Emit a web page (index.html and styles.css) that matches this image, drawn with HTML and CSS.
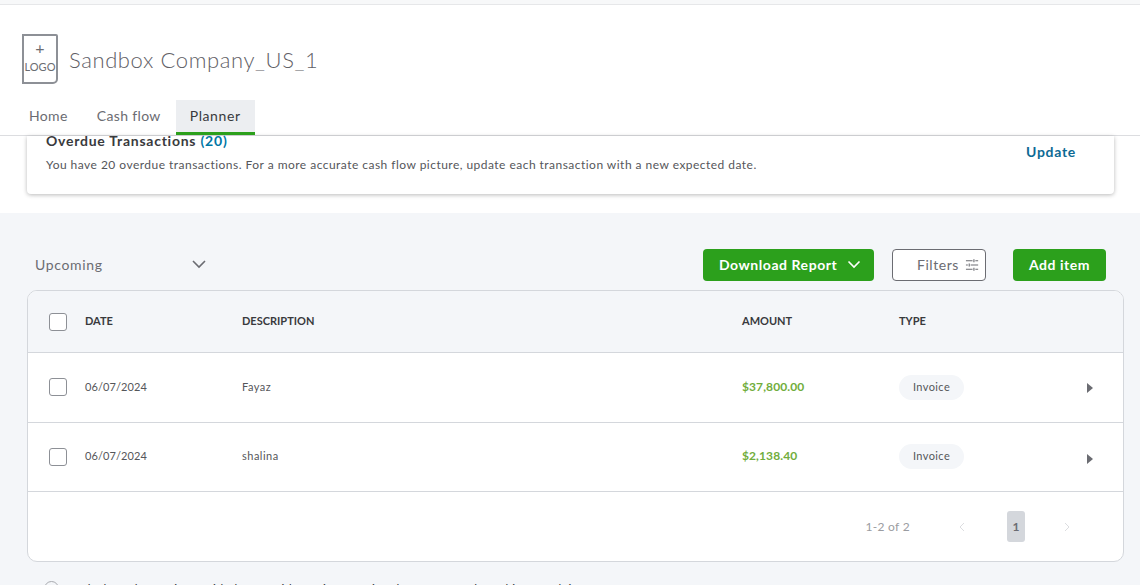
FILE: index.html
```html
<!DOCTYPE html>
<html>
<head>
  <title>Planner</title>
  <link rel="stylesheet" href="styles.css">
</head>
<body>
  <div class="top-strip"></div>
  <header class="header">
    <div class="company">
      <div class="logo-box">
        <span class="logo-plus">+</span>
        <span class="logo-text">LOGO</span>
      </div>
      <div class="company-name">Sandbox Company_US_1</div>
    </div>
    <nav class="tabs">
      <a class="tab">Home</a>
      <a class="tab">Cash flow</a>
      <a class="tab active">Planner</a>
    </nav>
  </header>

  <section class="notice-wrap">
    <div class="notice">
      <div class="notice-text">
        <div class="notice-title">Overdue Transactions <span class="count">(20)</span></div>
        <div class="notice-desc">You have 20 overdue transactions. For a more accurate cash flow picture, update each transaction with a new expected date.</div>
      </div>
      <a class="update">Update</a>
    </div>
  </section>

  <main class="main">
    <div class="toolbar">
      <div class="view-select">
        <span>Upcoming</span>
        <svg width="16" height="10" viewBox="0 0 16 10"><path d="M2 2l6 6 6-6" fill="none" stroke="#6b6c72" stroke-width="1.6"/></svg>
      </div>
      <div class="actions">
        <button class="btn btn-green btn-download">Download Report
          <svg width="14" height="9" viewBox="0 0 14 9"><path d="M1.500 1.500l5.500 5.500 5.500-5.500" fill="none" stroke="#fff" stroke-width="1.600"/></svg>
        </button>
        <button class="btn btn-filters">Filters
          <svg width="15" height="14" viewBox="0 0 15 14"><path d="M1 2.500h7M11 2.500h3M1 7h2M6 7h8M1 11.500h7M11 11.500h3M9.500 1v3M4.500 5.500v3M9.500 10v3" fill="none" stroke="#6b6c72" stroke-width="1.200"/></svg>
        </button>
        <button class="btn btn-green btn-add">Add item</button>
      </div>
    </div>

    <div class="table-card">
      <div class="row head">
        <div class="cell check"><span class="checkbox"></span></div>
        <div class="cell date">DATE</div>
        <div class="cell desc">DESCRIPTION</div>
        <div class="cell amount">AMOUNT</div>
        <div class="cell type">TYPE</div>
      </div>
      <div class="row item">
        <div class="cell check"><span class="checkbox"></span></div>
        <div class="cell date">06/07/2024</div>
        <div class="cell desc">Fayaz</div>
        <div class="cell amount">$37,800.00</div>
        <div class="cell type"><span class="pill">Invoice</span></div>
        <div class="cell arrow"></div>
      </div>
      <div class="row item">
        <div class="cell check"><span class="checkbox"></span></div>
        <div class="cell date">06/07/2024</div>
        <div class="cell desc">shalina</div>
        <div class="cell amount">$2,138.40</div>
        <div class="cell type"><span class="pill">Invoice</span></div>
        <div class="cell arrow arrow-low"></div>
      </div>
      <div class="pager">
        <span class="pager-count">1-2 of 2</span>
        <svg width="7" height="10" viewBox="0 0 7 10"><path d="M6 1L2 5l4 4" fill="none" stroke="#dcdde0" stroke-width="1"/></svg>
        <span class="page-num">1</span>
        <svg width="7" height="10" viewBox="0 0 7 10"><path d="M1 1l4 4-4 4" fill="none" stroke="#dcdde0" stroke-width="1"/></svg>
      </div>
    </div>

    <div class="footnote">
      <span class="info-dot"></span>
      <span>Cash flow planner is provided as a guide for informational purposes only and is not advice.</span>
    </div>
  </main>
</body>
</html>
```

FILE: styles.css
```css
html, body {
  margin: 0;
  padding: 0;
  height: 585px;
  overflow: hidden;
}
body {
  font-family: "Lato", "Open Sans", sans-serif;
  background-color: #fff;
  color: #393a3d;
}
.top-strip {
  height: 4px;
  background-color: #f7f8f9;
  border-bottom: 1px solid #e6e7e9;
}
.header {
  height: 130px;
  border-bottom: 1px solid #dcdde0;
  display: flex;
  flex-direction: column;
  padding-left: 22px;
}
.company {
  display: flex;
  align-items: center;
  gap: 11px;
  padding-top: 29px;
}
.logo-box {
  width: 32px;
  height: 46px;
  border: 2px solid #8d9096;
  border-radius: 0 2px 5px 0;
  display: flex;
  flex-direction: column;
  align-items: center;
  color: #6b6c72;
}
.logo-plus {
  font-size: 16px;
  line-height: 16px;
  margin-top: 4px;
}
.logo-text {
  font-size: 11px;
  line-height: 14px;
  margin-top: 4px;
}
.company-name {
  font-size: 22px;
  font-weight: 300;
  letter-spacing: 0.6px;
  color: #5f6066;
}
.tabs {
  display: flex;
  gap: 1px;
  margin-top: 16px;
  margin-left: -7px;
}
.tab {
  font-size: 14px;
  line-height: 32px;
  height: 32px;
  padding: 0 14px;
  color: #6b6c72;
  letter-spacing: 0.35px;
}
.tab.active {
  background-color: #eceef1;
  color: #393a3d;
  border-bottom: 3px solid #2ca01c;
  letter-spacing: 0.6px;
}
.notice-wrap {
  height: 77px;
  padding: 0 26px 0 27px;
}
.notice {
  height: 58px;
  background-color: #fff;
  border-radius: 0 0 4px 4px;
  box-shadow: 0 1px 4px rgba(0, 0, 0, 0.28);
  display: flex;
  justify-content: space-between;
  padding-left: 19px;
  padding-right: 38px;
}
.notice-title {
  font-size: 14px;
  font-weight: 700;
  line-height: 18px;
  margin-top: -4px;
  letter-spacing: 0.75px;
}
.count {
  color: #0077a5;
  letter-spacing: 0.8px;
}
.notice-desc {
  font-size: 12px;
  line-height: 16px;
  margin-top: 7px;
  color: #55565a;
  letter-spacing: 0.47px;
}
.update {
  font-size: 14px;
  font-weight: 700;
  color: #0d6a94;
  margin-top: 7px;
  letter-spacing: 0.7px;
}
.main {
  background-color: #f4f6f9;
  box-sizing: border-box;
  height: 372px;
  overflow: hidden;
  padding: 36px 16px 0 27px;
}
.toolbar {
  height: 32px;
  display: flex;
  justify-content: space-between;
  align-items: center;
  padding-right: 18px;
}
.view-select {
  width: 172px;
  padding-left: 8px;
  padding-bottom: 2px;
  display: flex;
  justify-content: space-between;
  align-items: center;
  font-size: 14px;
  color: #6b6c72;
  letter-spacing: 0.65px;
}
.actions {
  display: flex;
  gap: 18px;
}
.btn {
  height: 32px;
  border-radius: 4px;
  font-family: inherit;
  font-size: 14px;
  font-weight: 700;
  border: none;
  padding-bottom: 2px;
  display: flex;
  align-items: center;
  justify-content: center;
  letter-spacing: 0.55px;
}
.btn-green {
  background-color: #2ca01c;
  color: #fff;
}
.btn-download {
  width: 171px;
  gap: 10px;
  justify-content: flex-start;
  padding-left: 16px;
}
.btn-filters {
  width: 94px;
  background-color: #fff;
  border: 1px solid #6b6c72;
  color: #6b6c72;
  font-weight: 400;
  gap: 6px;
  padding-left: 24px;
  margin-right: 9px;
}
.btn-add {
  width: 93px;
}
.table-card {
  margin-top: 9px;
  height: 270px;
  border: 1px solid #d4d7dc;
  border-radius: 10px;
  overflow: hidden;
  background-color: #fff;
}
.row {
  display: flex;
  align-items: center;
  border-bottom: 1px solid #d4d7dc;
  padding-left: 21px;
}
.row.head {
  height: 61px;
  background-color: #f4f6f9;
  font-size: 11px;
  font-weight: 700;
}
.row.item {
  height: 68.500px;
  background-color: #fff;
  font-size: 11px;
  color: #55565a;
  letter-spacing: 0.1px;
}
.check {
  width: 36px;
  display: flex;
}
.checkbox {
  width: 16px;
  height: 16px;
  background-color: #fff;
  border: 1px solid #8d9096;
  border-radius: 3px;
}
.date, .desc, .amount, .type {
  padding-bottom: 2px;
}
.date {
  width: 157px;
  flex: none;
}
.desc {
  width: 500px;
  flex: none;
}
.row.item .desc {
  letter-spacing: 0.5px;
}
.amount {
  width: 157px;
  flex: none;
}
.row.item .amount {
  font-weight: 700;
  color: #71ad3c;
  font-size: 12px;
}
.type {
  flex: 1;
}
.row.item .type {
  padding-bottom: 0;
}
.pill {
  display: inline-block;
  width: 65px;
  height: 25px;
  line-height: 23px;
  text-align: center;
  background-color: #f4f6f9;
  border-radius: 13px;
  letter-spacing: 0.4px;
}
.arrow {
  width: 0;
  height: 0;
  border-left: 6px solid #6b6c72;
  border-top: 5px solid transparent;
  border-bottom: 5px solid transparent;
  margin-right: 30px;
  margin-top: 2px;
}
.arrow-low {
  margin-top: 4px;
}
.pager {
  height: 69px;
  display: flex;
  align-items: center;
  justify-content: flex-end;
  padding-right: 52px;
  font-size: 12px;
  color: #9a9ca1;
}
.pager-count {
  margin-right: 48px;
  letter-spacing: 0.3px;
}
.page-num {
  width: 18px;
  height: 31px;
  line-height: 31px;
  text-align: center;
  background-color: #d4d7dc;
  border-radius: 3px;
  color: #6b6c72;
  font-weight: 700;
  margin: 0 39px 0 42px;
}
.footnote {
  display: flex;
  align-items: center;
  gap: 8px;
  margin-top: 19px;
  padding-left: 17px;
  font-size: 12px;
  color: #393a3d;
  letter-spacing: 0.55px;
}
.info-dot {
  width: 13px;
  height: 13px;
  border: 1px solid #a9abb0;
  border-radius: 50%;
}
```
